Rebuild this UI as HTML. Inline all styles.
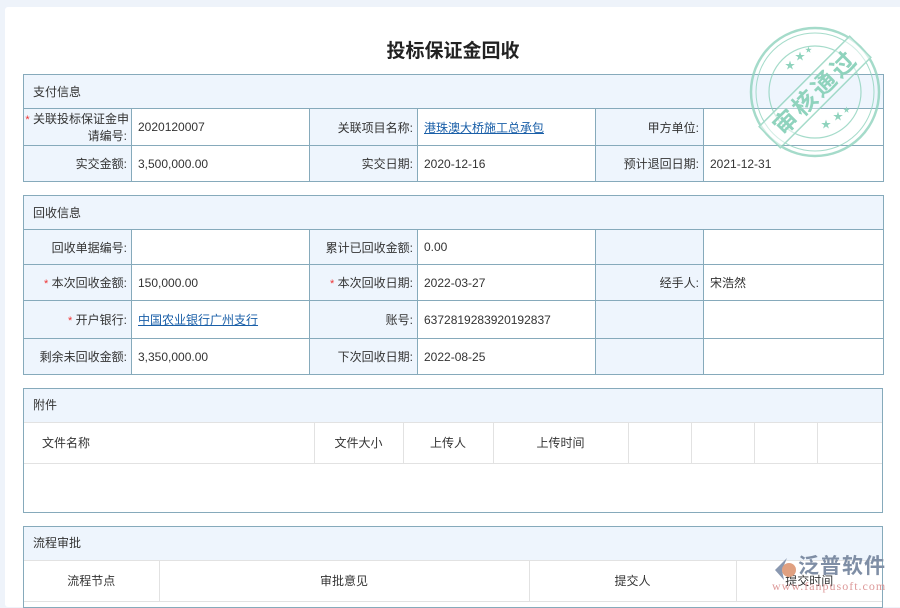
<!DOCTYPE html>
<html><head><meta charset="utf-8"><style>
*{margin:0;padding:0}
body{width:900px;height:600px;overflow:hidden;background:#eef3fa;font-family:"Liberation Sans","Noto Sans CJK SC",sans-serif;font-size:12px;color:#333;position:relative}
.panel{position:absolute;left:5px;top:7px;width:900px;height:600px;background:#fff;border-radius:3px}
h1{position:absolute;left:0;width:906px;top:36px;text-align:center;font-size:19px;font-weight:bold;color:#222}
table{position:absolute;left:23px;width:860px;border-collapse:collapse;table-layout:fixed}
td{border:1px solid #86aabb;padding:0 6px;white-space:nowrap;overflow:hidden}
td.h{background:#eef5fd;padding-left:9px}
td.l{background:#eef5fd;text-align:right;padding-right:4px}
.s{color:#e33;font-size:11px}
a{color:#1a5fa8;text-decoration:underline}
table.g td{border:none;border-right:1px solid #e2e2e2;border-bottom:1px solid #e2e2e2;text-align:center}
.box{position:absolute;left:23px;width:858px;border:1px solid #86aabb;overflow:hidden}
.box .hd{height:33px;line-height:33px;background:#eef5fd;padding-left:9px;border-bottom:1px solid #e2e2e2}
.box table{position:static;width:100%}
</style></head><body>
<div class="panel"></div>
<h1>投标保证金回收</h1>

<table style="top:74px">
<col style="width:108px"><col style="width:178px"><col style="width:108px"><col style="width:178px"><col style="width:108px"><col style="width:180px">
<tr style="height:34px"><td class="h" colspan="6">支付信息</td></tr>
<tr style="height:37px"><td class="l" style="line-height:16px;padding-left:0;padding-right:4px"><div style="margin-right:-2px"><span class="s">*</span> 关联投标保证金申</div><div>请编号:</div></td><td>2020120007</td><td class="l">关联项目名称:</td><td><a>港珠澳大桥施工总承包</a></td><td class="l">甲方单位:</td><td></td></tr>
<tr style="height:36px"><td class="l">实交金额:</td><td>3,500,000.00</td><td class="l">实交日期:</td><td>2020-12-16</td><td class="l">预计退回日期:</td><td>2021-12-31</td></tr>
</table>

<table style="top:195px">
<col style="width:108px"><col style="width:178px"><col style="width:108px"><col style="width:178px"><col style="width:108px"><col style="width:180px">
<tr style="height:34px"><td class="h" colspan="6">回收信息</td></tr>
<tr style="height:35px"><td class="l">回收单据编号:</td><td></td><td class="l">累计已回收金额:</td><td>0.00</td><td class="l"></td><td></td></tr>
<tr style="height:36px"><td class="l"><span class="s">*</span> 本次回收金额:</td><td>150,000.00</td><td class="l"><span class="s">*</span> 本次回收日期:</td><td>2022-03-27</td><td class="l">经手人:</td><td>宋浩然</td></tr>
<tr style="height:38px"><td class="l"><span class="s">*</span> 开户银行:</td><td><a>中国农业银行广州支行</a></td><td class="l">账号:</td><td>6372819283920192837</td><td class="l"></td><td></td></tr>
<tr style="height:36px"><td class="l">剩余未回收金额:</td><td>3,350,000.00</td><td class="l">下次回收日期:</td><td>2022-08-25</td><td class="l"></td><td></td></tr>
</table>

<div class="box" style="top:388px;height:123px">
<div class="hd">附件</div>
<table class="g">
<col style="width:290px"><col style="width:89px"><col style="width:90px"><col style="width:135px"><col style="width:63px"><col style="width:63px"><col style="width:63px"><col>
<tr style="height:40px"><td style="text-align:left;padding-left:18px">文件名称</td><td>文件大小</td><td>上传人</td><td>上传时间</td><td></td><td></td><td></td><td style="border-right:none"></td></tr>
</table>
</div>

<div class="box" style="top:526px;height:80px">
<div class="hd">流程审批</div>
<table class="g">
<col style="width:135px"><col style="width:370px"><col style="width:207px"><col>
<tr style="height:40px"><td>流程节点</td><td>审批意见</td><td>提交人</td><td style="border-right:none">提交时间</td></tr>
</table>
</div>

<svg style="position:absolute;left:745px;top:22px" width="140" height="140" viewBox="0 0 140 140">
<g fill="none" stroke="#8fd3bd" opacity="0.8">
<circle cx="70" cy="70" r="64" stroke-width="2.5"/><circle cx="70" cy="70" r="59" stroke-width="1"/><circle cx="70" cy="70" r="46" stroke-width="1.2"/>
<g transform="rotate(-45 70 70)"><rect x="6" y="55" width="128" height="30" stroke-width="1.5" fill="#fff" fill-opacity="0.5"/></g>
</g>
<text x="70" y="79" transform="rotate(-45 70 70)" text-anchor="middle" font-size="24" font-weight="bold" fill="#8fd3bd" font-family="Noto Sans CJK SC,sans-serif" letter-spacing="3">审核通过</text>
<g fill="#8fd3bd" font-size="10"><text x="40" y="47">★</text><text x="50" y="38">★</text><text x="60" y="30" font-size="7">★</text><text x="76" y="106">★</text><text x="88" y="98">★</text><text x="98" y="90" font-size="7">★</text></g>
</svg>

<div style="position:absolute;left:770px;top:552px;width:125px;height:45px">
<svg width="26" height="26" style="position:absolute;left:2px;top:4px" viewBox="0 0 26 26"><path d="M15 2 L3 14 L12 24 L10 14 Z" fill="#8a98b0"/><circle cx="17" cy="14" r="7" fill="#e0a080"/></svg>
<div style="position:absolute;left:28px;top:-2px;font-size:21px;font-weight:bold;color:#7f8ea5;font-family:'Noto Sans CJK SC',sans-serif;letter-spacing:1px">泛普软件</div>
<div style="position:absolute;left:2px;top:27px;font-size:12px;color:#d99;font-family:'Liberation Serif',serif;letter-spacing:1px">www.fanpusoft.com</div>
</div>
</body></html>
